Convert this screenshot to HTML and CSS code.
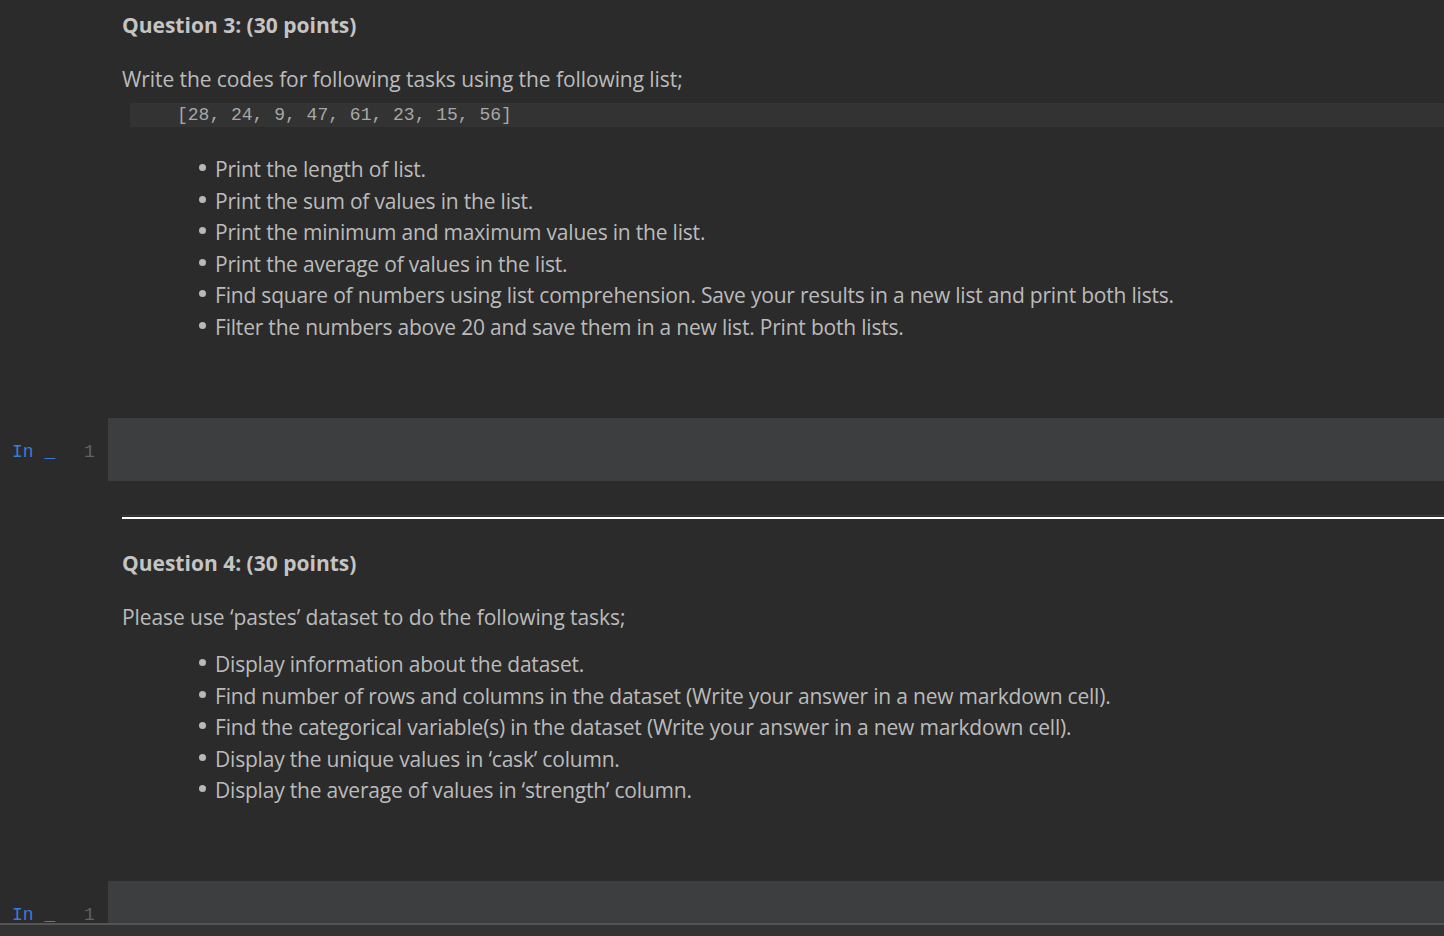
FILE: index.html
```html
<!DOCTYPE html>
<html>
<head>
<meta charset="utf-8">
<link rel="stylesheet" href="styles.css">
</head>
<body>
<div class="nb">
  <div class="md md-first">
    <h3 class="q">Question 3: (30 points)</h3>
    <p class="para">Write the codes for following tasks using the following list;</p>
    <pre class="code">[28, 24, 9, 47, 61, 23, 15, 56]</pre>
    <ul class="tasks">
      <li>Print the length of list.</li>
      <li>Print the sum of values in the list.</li>
      <li>Print the minimum and maximum values in the list.</li>
      <li>Print the average of values in the list.</li>
      <li>Find square of numbers using list comprehension. Save your results in a new list and print both lists.</li>
      <li>Filter the numbers above 20 and save them in a new list. Print both lists.</li>
    </ul>
  </div>
  <div class="cell">
    <div class="prompt"><span class="in">In _</span><span class="ln">1</span></div>
    <div class="editor"></div>
  </div>
  <div class="sep"></div>
  <div class="md md-second">
    <h3 class="q">Question 4: (30 points)</h3>
    <p class="para">Please use ‘pastes’ dataset to do the following tasks;</p>
    <ul class="tasks tasks2">
      <li>Display information about the dataset.</li>
      <li>Find number of rows and columns in the dataset (Write your answer in a new markdown cell).</li>
      <li>Find the categorical variable(s) in the dataset (Write your answer in a new markdown cell).</li>
      <li>Display the unique values in ‘cask’ column.</li>
      <li>Display the average of values in ‘strength’ column.</li>
    </ul>
  </div>
  <div class="cell cell-last">
    <div class="prompt prompt-last"><span class="in">In _</span><span class="ln">1</span></div>
    <div class="editor editor-last"></div>
  </div>
  <div class="footer"></div>
</div>
</body>
</html>
```
FILE: styles.css
```css
html, body {
  margin: 0;
  padding: 0;
  background: #2b2b2b;
  height: 100%;
  overflow: hidden;
}
.nb {
  font-family: "Open Sans", "Noto Sans", sans-serif;
  color: #bbbbbb;
  width: 1444px;
  height: 936px;
  display: flex;
  flex-direction: column;
}
.md {
  padding-left: 122px;
}
.md-first {
  padding-top: 10px;
}
.q {
  margin: 0;
  font-size: 21px;
  font-weight: 700;
  line-height: 30px;
  color: #c4c4c4;
}
.para {
  margin: 24px 0 0 0;
  font-size: 21px;
  line-height: 30px;
  letter-spacing: -0.08px;
}
.code {
  margin: 9px 0 0 8px;
  background: #333333;
  height: 24px;
  line-height: 25px;
  padding: 0 0 0 47px;
  font-family: "Liberation Mono", monospace;
  font-size: 18px;
  color: #a8a8a8;
}
.tasks {
  margin: 27px 0 0 0;
  padding: 0 0 0 93px;
  list-style: none;
  font-size: 21px;
  line-height: 31.5px;
  letter-spacing: -0.2px;
}
.tasks li {
  position: relative;
}
.tasks li::before {
  content: "";
  position: absolute;
  left: -16px;
  top: 10px;
  width: 7px;
  height: 7px;
  border-radius: 50%;
  background: #b8b8b8;
}
.cell {
  margin-top: 75px;
  display: flex;
  height: 63px;
}
.prompt {
  width: 108px;
  display: flex;
  align-items: center;
  font-family: "Liberation Mono", "DejaVu Sans Mono", monospace;
  font-size: 18px;
  padding-top: 5px;
  box-sizing: border-box;
}
.in {
  color: #3a7bd5;
  margin-left: 12px;
  flex: 0 0 72px;
}
.ln {
  color: #606366;
}
.editor {
  flex: 1;
  background: #3d3e40;
}
.sep {
  margin: 34px 0 0 122px;
  border-top: 1px solid #3c3c3c;
  border-bottom: 2px solid #ffffff;
  height: 1px;
  background: #2b2b2b;
}
.md-second {
  padding-top: 29px;
}
.md-second .para {
  margin-top: 24px;
}
.tasks2 {
  margin-top: 17px;
}
.cell-last {
  margin-top: 74px;
  height: 42px;
  flex: none;
}
.prompt-last {
  align-items: flex-end;
  padding-top: 0;
  padding-bottom: 0;
}
.prompt-last .in,
.prompt-last .ln {
  margin-bottom: -2px;
}
.footer {
  border-top: 2px solid #555555;
  background: #333333;
  flex: 1;
  position: relative;
}
```
